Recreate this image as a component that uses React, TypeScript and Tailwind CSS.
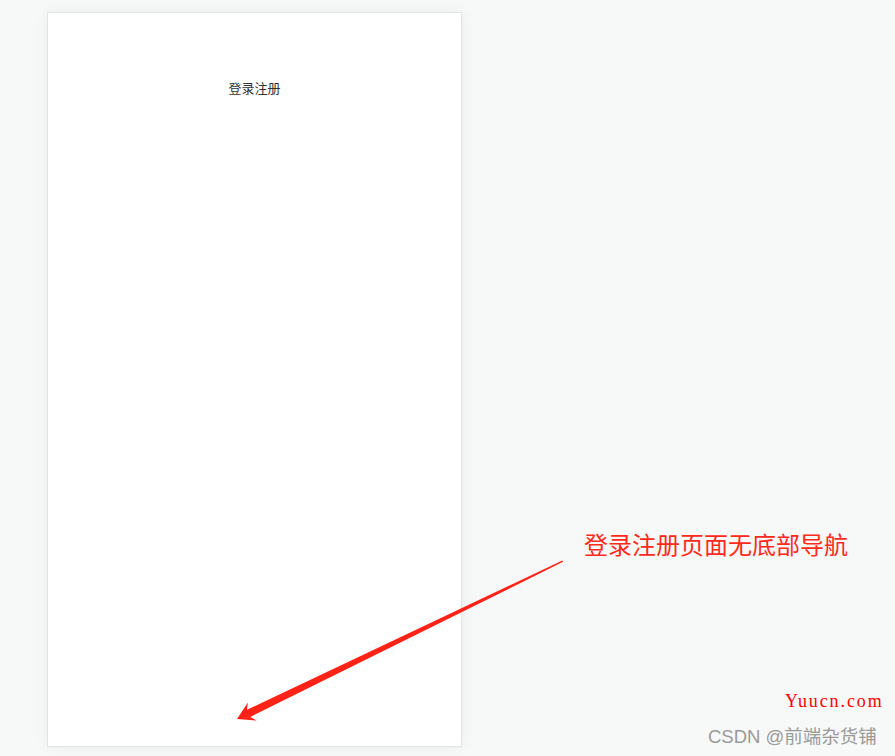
import React from "react";

export default function App() {
  return (
    <div
      className="relative w-[895px] h-[756px] overflow-hidden bg-[#f7f8f8]"
      style={{ fontFamily: '"Noto Sans CJK SC", "Noto Sans", sans-serif' }}
    >
      <div className="pl-[47px] pt-[12px]">
        <div className="w-[415px] h-[735px] bg-white border border-[#e2e3e3] shadow-[0_0_14px_rgba(0,0,0,0.06)] flex flex-col items-center">
          <div className="pt-[65px] text-[13px] leading-[20px] text-[#303133]">登录注册</div>
        </div>
      </div>

      <div className="absolute left-[584px] top-[528px] text-[24px] leading-[32px] text-[#ff2a1a] whitespace-nowrap">
        登录注册页面无底部导航
      </div>

      <svg className="absolute left-0 top-0 pointer-events-none" width="895" height="756" viewBox="0 0 895 756">
        <polygon
          fill="#ff2216"
          points="237,719 247.9,702.6 247.0,709.7 562.4,560.4 563.1,561.8 250.4,716.9 256.7,720.6"
        />
      </svg>

      <div
        className="absolute left-[785px] top-[689px] text-[18px] leading-[24px] text-[#ff0000] whitespace-nowrap tracking-[1.9px]"
        style={{ fontFamily: '"Liberation Serif", serif' }}
      >
        Yuucn.com
      </div>

      <div
        className="absolute left-[708px] top-[724px] text-[18.5px] leading-[26px] text-[#9a9a9a] whitespace-nowrap"
        style={{ fontFamily: '"Liberation Sans", "Noto Sans CJK SC", sans-serif' }}
      >
        CSDN @前端杂货铺
      </div>
    </div>
  );
}
